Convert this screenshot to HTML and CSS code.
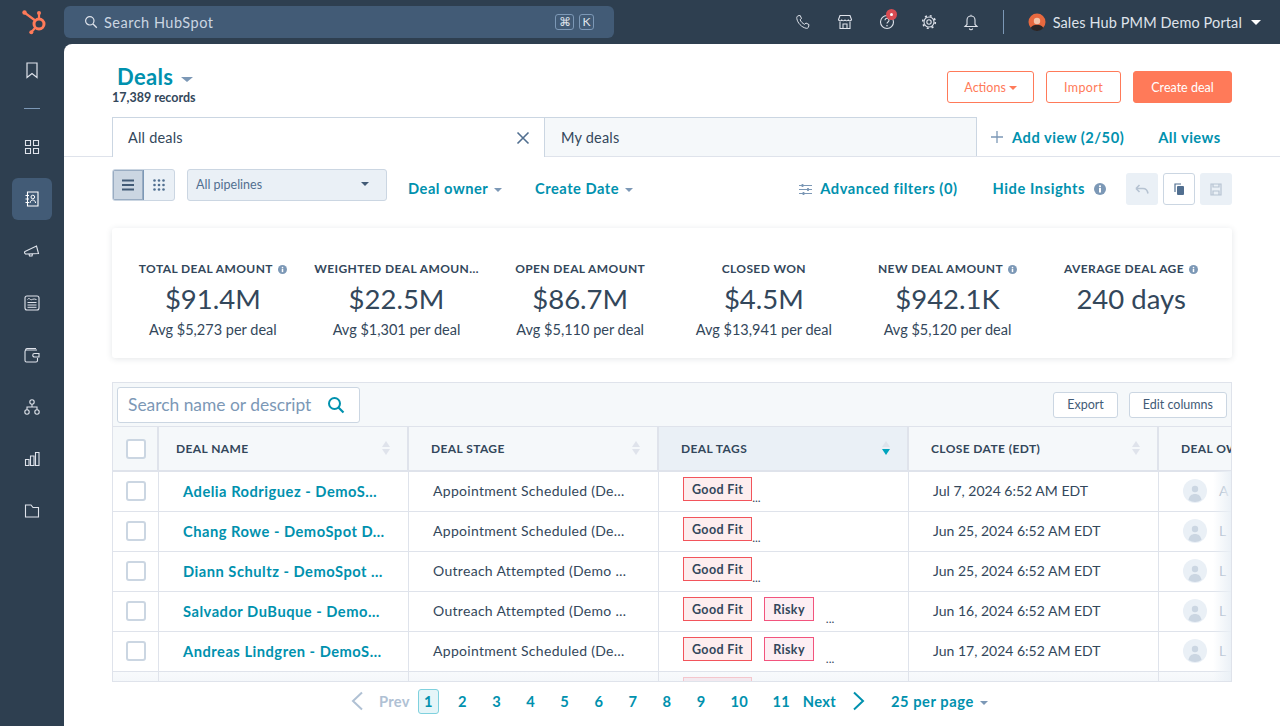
FILE: index.html
```html
<!DOCTYPE html>
<html lang="en">
<head>
<meta charset="utf-8">
<title>Deals</title>
<link rel="stylesheet" href="styles.css">
</head>
<body>
<header class="topbar">
  <div class="logo-cell">
    <svg class="logo" width="24" height="25" viewBox="0 0 24 25"><circle cx="17" cy="14" r="5" fill="none" stroke="#ff7a59" stroke-width="3"/><path d="M17 9V4M13.200 10.500 3 3M13 18 9.500 22" stroke="#ff7a59" stroke-width="2.200" fill="none"/><circle cx="17" cy="3" r="2" fill="#ff7a59"/><circle cx="2.500" cy="2.500" r="2.200" fill="#ff7a59"/><circle cx="9.300" cy="22.300" r="2" fill="#ff7a59"/></svg>
  </div>
  <div class="search">
    <svg class="ico" width="14" height="14" viewBox="0 0 14 14"><circle cx="5.800" cy="5.800" r="4.200" fill="none" stroke="#dfe3eb" stroke-width="1.200"/><path d="M9 9l3.800 3.800" stroke="#dfe3eb" stroke-width="1.300"/></svg>
    <span class="search-text">Search HubSpot</span>
    <span class="keys"><kbd class="key key-cmd">⌘</kbd><kbd class="key">K</kbd></span>
  </div>
  <div class="top-icons">
    <svg width="16" height="16" viewBox="0 0 16 16"><path d="M3 1.800 5.200 1.500l1.300 3-1.400 1.200c.8 2 2.400 3.700 4.400 4.600L11 9l3 1.600-.5 2.400c-.3 1-1.200 1.500-2.200 1.300C6.500 13.300 2.600 9 1.800 4.500 1.600 3.300 2 2.300 3 1.800Z" fill="none" stroke="#dfe3eb" stroke-width="1"/></svg>
    <svg width="16" height="16" viewBox="0 0 16 16"><path d="M3 1.500h10l1.500 4a1.800 1.800 0 0 1-3.300.5 2 2 0 0 1-3.200 0 2 2 0 0 1-3.200 0A1.800 1.800 0 0 1 1.500 5.500ZM3 8v6.500h10V8M6 14.500V10h4v4.500" fill="none" stroke="#dfe3eb" stroke-width="1.100"/></svg>
    <span class="help">
      <svg width="16" height="16" viewBox="0 0 16 16"><circle cx="8" cy="8" r="6.500" fill="none" stroke="#dfe3eb" stroke-width="1.100"/><path d="M6 6.200a2 2 0 1 1 3 1.800c-.7.400-1 .8-1 1.600" fill="none" stroke="#dfe3eb" stroke-width="1.100"/><circle cx="8" cy="11.800" r=".8" fill="#dfe3eb"/></svg>
      <span class="badge"></span>
    </span>
    <svg width="16" height="16" viewBox="0 0 16 16"><circle cx="8" cy="8" r="2.200" fill="none" stroke="#dfe3eb" stroke-width="1.100"/><circle cx="8" cy="8" r="5" fill="none" stroke="#dfe3eb" stroke-width="1.100"/><circle cx="8" cy="8" r="6.300" fill="none" stroke="#dfe3eb" stroke-width="1.600" stroke-dasharray="2 2.950"/></svg>
    <svg width="16" height="17" viewBox="0 0 16 17"><path d="M8 2a4 4 0 0 1 4 4v4.500l2 2H2l2-2V6a4 4 0 0 1 4-4ZM8 .8V2M6.300 14.500a1.800 1.800 0 0 0 3.400 0" fill="none" stroke="#dfe3eb" stroke-width="1.100"/></svg>
  </div>
  <span class="divider"></span>
  <div class="portal">
    <svg class="avatar" width="18" height="18" viewBox="0 0 18 18"><circle cx="9" cy="9" r="8.500" fill="#e8693f"/><path d="M2.500 15c1.500-2.500 3.500-3.300 6.500-3.300s5 .8 6.500 3.300A8.500 8.500 0 0 1 2.500 15Z" fill="#2b2626"/><circle cx="9" cy="8" r="3.200" fill="#f3c3a8"/></svg>
    <span>Sales Hub PMM Demo Portal</span>
    <i class="caret caret-white"></i>
  </div>
</header>

<div class="shell">
  <nav class="sidebar">
    <span class="nav-item"><svg width="18" height="18" viewBox="0 0 18 18"><path d="M4 2h10v14.500l-5-4-5 4Z" fill="none" stroke="#dfe3eb" stroke-width="1.200"/></svg></span>
    <span class="nav-rule"></span>
    <span class="nav-item"><svg width="18" height="18" viewBox="0 0 18 18"><path d="M2.500 2.500h5v5h-5ZM10.500 2.500h5v5h-5ZM2.500 10.500h5v5h-5ZM10.500 10.500h5v5h-5Z" fill="none" stroke="#dfe3eb" stroke-width="1.100"/></svg></span>
    <span class="nav-item nav-active"><svg width="18" height="18" viewBox="0 0 18 18"><path d="M4.500 2h10.500v14H4.500ZM2.500 5.500h3.500M2.500 9h3.500M2.500 12.500h3.500" fill="none" stroke="#fff" stroke-width="1.100"/><circle cx="9.800" cy="7" r="1.800" fill="none" stroke="#fff"/><path d="M7 13c.3-2 1.400-3 2.800-3s2.500 1 2.800 3" fill="none" stroke="#fff"/></svg></span>
    <span class="nav-item"><svg width="18" height="18" viewBox="0 0 18 18"><path d="M2 9.500 13.500 4l2 7.500-12 .5a1.500 1.500 0 0 1-1.500-2.500ZM6 12l.5 2h2.500l.5-2" fill="none" stroke="#dfe3eb" stroke-width="1.100"/></svg></span>
    <span class="nav-item"><svg width="18" height="18" viewBox="0 0 18 18"><rect x="2" y="2" width="14" height="14" rx="2" fill="none" stroke="#dfe3eb" stroke-width="1.100"/><path d="M4.500 5.500c1-1.500 2-1 3 0s2.500-1.500 6 0M4.500 8.500h9M4.500 11h9M4.500 13.300h9" fill="none" stroke="#dfe3eb"/></svg></span>
    <span class="nav-item"><svg width="18" height="18" viewBox="0 0 18 18"><path d="M14 4H3.500a1.500 1.500 0 0 0-1.500 1.500v9A1.500 1.500 0 0 0 3.500 16H13a1.500 1.500 0 0 0 1.500-1.500V12M2.500 4c.2-1 .8-1.500 1.500-1.500h9M11.500 7.500H16v3.500h-4.500a1.700 1.700 0 0 1 0-3.500Z" fill="none" stroke="#dfe3eb" stroke-width="1.100"/></svg></span>
    <span class="nav-item"><svg width="18" height="18" viewBox="0 0 18 18"><circle cx="9" cy="4" r="2.200" fill="none" stroke="#dfe3eb" stroke-width="1.100"/><circle cx="4" cy="14" r="2.200" fill="none" stroke="#dfe3eb" stroke-width="1.100"/><circle cx="14" cy="14" r="2.200" fill="none" stroke="#dfe3eb" stroke-width="1.100"/><path d="M9 6.200V9M4 11.800V9h10v2.800" fill="none" stroke="#dfe3eb" stroke-width="1.100"/></svg></span>
    <span class="nav-item"><svg width="18" height="18" viewBox="0 0 18 18"><path d="M2.500 9.500h3.500v6H2.500ZM7.500 6h3.500v9.500H7.500ZM12.500 2.500H16v13h-3.500Z" fill="none" stroke="#dfe3eb" stroke-width="1.100"/></svg></span>
    <span class="nav-item"><svg width="18" height="18" viewBox="0 0 18 18"><path d="M2.500 3h5.500l2 2.500h5.500v9.500H2.500Z" fill="none" stroke="#dfe3eb" stroke-width="1.100"/></svg></span>
  </nav>

  <main class="content">
    <section class="page-head">
      <div class="title-block">
        <h1 class="title">Deals <i class="caret caret-grey caret-lg"></i></h1>
        <p class="records">17,389 records</p>
      </div>
      <div class="head-actions">
        <button class="btn btn-outline">Actions <i class="caret caret-orange"></i></button>
        <button class="btn btn-outline btn-import">Import</button>
        <button class="btn btn-solid">Create deal</button>
      </div>
    </section>

    <section class="tabs">
      <div class="tab tab-active"><span>All deals</span>
        <svg width="14" height="14" viewBox="0 0 14 14"><path d="M1.500 1.500l11 11M12.500 1.500l-11 11" stroke="#516f90" stroke-width="1.600"/></svg>
      </div>
      <div class="tab tab-idle"><span>My deals</span></div>
      <div class="tab-links">
        <svg width="12" height="12" viewBox="0 0 12 12"><path d="M6 0v12M0 6h12" stroke="#7c98b6" stroke-width="1.300"/></svg>
        <a class="link add-view">Add view (2/50)</a>
        <a class="link">All views</a>
      </div>
    </section>

    <section class="toolbar">
      <div class="view-toggle">
        <span class="toggle toggle-on"><svg width="14" height="12" viewBox="0 0 14 12"><path d="M1 1.500h12M1 6h12M1 10.500h12" stroke="#425b76" stroke-width="2"/></svg></span>
        <span class="toggle"><svg width="14" height="14" viewBox="0 0 14 14" fill="#516f90"><circle cx="2.500" cy="2.500" r="1.300"/><circle cx="7" cy="2.500" r="1.300"/><circle cx="11.500" cy="2.500" r="1.300"/><circle cx="2.500" cy="7" r="1.300"/><circle cx="7" cy="7" r="1.300"/><circle cx="11.500" cy="7" r="1.300"/><circle cx="2.500" cy="11.500" r="1.300"/><circle cx="7" cy="11.500" r="1.300"/><circle cx="11.500" cy="11.500" r="1.300"/></svg></span>
      </div>
      <div class="select"><span>All pipelines</span><i class="caret caret-dark"></i></div>
      <a class="link filter">Deal owner <i class="caret caret-grey"></i></a>
      <a class="link filter">Create Date <i class="caret caret-grey"></i></a>
      <div class="toolbar-right">
        <svg width="13" height="13" viewBox="0 0 13 13"><path d="M0 2.500h13M0 6.500h13M0 10.500h13" stroke="#7c98b6" stroke-width="1.200"/><path d="M3.500 1v3M9 5v3M4.500 9v3" stroke="#7c98b6" stroke-width="1.800"/></svg>
        <a class="link adv">Advanced filters (0)</a>
        <a class="link hide-insights">Hide Insights</a>
        <svg class="info-lg" width="12" height="12" viewBox="0 0 12 12"><circle cx="6" cy="6" r="6" fill="#7c98b6"/><rect x="5" y="5" width="2" height="4.500" fill="#fff"/><circle cx="6" cy="3.300" r="1.100" fill="#fff"/></svg>
        <span class="square square-off"><svg width="14" height="10" viewBox="0 0 14 10"><path d="M1 4.500 4.500 1M1 4.500 4.500 8M1 4.500h7c3 0 4.500 2 5 5" fill="none" stroke="#b6c3d2" stroke-width="1.600"/></svg></span>
        <span class="square square-on"><svg width="10" height="12" viewBox="0 0 10 12"><rect x="3" y="3" width="7" height="9" rx="1" fill="#516f90"/><path d="M1 9V1h6" fill="none" stroke="#516f90" stroke-width="1.200"/></svg></span>
        <span class="square square-off"><svg width="12" height="13" viewBox="0 0 12 13"><path d="M1 1h10v11H1ZM3 1v3h6V1M3 12V8h6v4" fill="none" stroke="#b6c3d2" stroke-width="1.200"/></svg></span>
      </div>
    </section>

    <section class="kpis">
      <div class="kpi"><h3 class="kpi-label">TOTAL DEAL AMOUNT <svg class="info" width="9" height="9" viewBox="0 0 12 12"><circle cx="6" cy="6" r="6" fill="#7c98b6"/><rect x="5" y="5" width="2" height="4.500" fill="#fff"/><circle cx="6" cy="3.300" r="1.100" fill="#fff"/></svg></h3><p class="kpi-value">$91.4M</p><p class="kpi-sub">Avg $5,273 per deal</p></div>
      <div class="kpi"><h3 class="kpi-label">WEIGHTED DEAL AMOUN…</h3><p class="kpi-value">$22.5M</p><p class="kpi-sub">Avg $1,301 per deal</p></div>
      <div class="kpi"><h3 class="kpi-label">OPEN DEAL AMOUNT</h3><p class="kpi-value">$86.7M</p><p class="kpi-sub">Avg $5,110 per deal</p></div>
      <div class="kpi"><h3 class="kpi-label">CLOSED WON</h3><p class="kpi-value">$4.5M</p><p class="kpi-sub">Avg $13,941 per deal</p></div>
      <div class="kpi"><h3 class="kpi-label">NEW DEAL AMOUNT <svg class="info" width="9" height="9" viewBox="0 0 12 12"><circle cx="6" cy="6" r="6" fill="#7c98b6"/><rect x="5" y="5" width="2" height="4.500" fill="#fff"/><circle cx="6" cy="3.300" r="1.100" fill="#fff"/></svg></h3><p class="kpi-value">$942.1K</p><p class="kpi-sub">Avg $5,120 per deal</p></div>
      <div class="kpi"><h3 class="kpi-label">AVERAGE DEAL AGE <svg class="info" width="9" height="9" viewBox="0 0 12 12"><circle cx="6" cy="6" r="6" fill="#7c98b6"/><rect x="5" y="5" width="2" height="4.500" fill="#fff"/><circle cx="6" cy="3.300" r="1.100" fill="#fff"/></svg></h3><p class="kpi-value">240 days</p></div>
    </section>

    <section class="table-wrap">
      <div class="table-tools">
        <div class="table-search">
          <span class="table-search-text">Search name or descript</span>
          <svg width="18" height="18" viewBox="0 0 18 18"><circle cx="7.500" cy="7.500" r="5.500" fill="none" stroke="#0091ae" stroke-width="2"/><path d="M11.500 11.500l5 5" stroke="#0091ae" stroke-width="2.200"/></svg>
        </div>
        <div class="table-btns">
          <button class="btn-small">Export</button>
          <button class="btn-small">Edit columns</button>
        </div>
      </div>
      <div class="grid">
        <div class="row row-head">
          <div class="cell cell-check cell-check-head"><span class="check"></span></div>
          <div class="cell cell-head cell-head-first">DEAL NAME<span class="sort"><i class="up"></i><i class="down"></i></span></div>
          <div class="cell cell-head">DEAL STAGE<span class="sort"><i class="up"></i><i class="down"></i></span></div>
          <div class="cell cell-head cell-sorted">DEAL TAGS<span class="sort"><i class="up"></i><i class="down down-on"></i></span></div>
          <div class="cell cell-head">CLOSE DATE (EDT)<span class="sort"><i class="up"></i><i class="down"></i></span></div>
          <div class="cell cell-head">DEAL OW</div>
        </div>
        <div class="row">
          <div class="cell cell-check"><span class="check"></span></div>
          <div class="cell cell-name"><a class="link">Adelia Rodriguez - DemoS…</a></div>
          <div class="cell cell-text">Appointment Scheduled (De…</div>
          <div class="cell cell-tags"><span class="tag tag-red">Good Fit</span><span class="more">...</span></div>
          <div class="cell cell-date">Jul 7, 2024 6:52 AM EDT</div>
          <div class="cell cell-owner"><svg class="user" width="24" height="24" viewBox="0 0 24 24"><circle cx="12" cy="12" r="12" fill="#eaf0f6"/><circle cx="12" cy="10" r="3.200" fill="#cbd6e2"/><path d="M5.500 21c.6-4 3-6 6.500-6s5.900 2 6.500 6a12 12 0 0 1-13 0Z" fill="#cbd6e2"/></svg><span class="owner-name">A</span></div>
        </div>
        <div class="row">
          <div class="cell cell-check"><span class="check"></span></div>
          <div class="cell cell-name"><a class="link">Chang Rowe - DemoSpot D…</a></div>
          <div class="cell cell-text">Appointment Scheduled (De…</div>
          <div class="cell cell-tags"><span class="tag tag-red">Good Fit</span><span class="more">...</span></div>
          <div class="cell cell-date">Jun 25, 2024 6:52 AM EDT</div>
          <div class="cell cell-owner"><svg class="user" width="24" height="24" viewBox="0 0 24 24"><circle cx="12" cy="12" r="12" fill="#eaf0f6"/><circle cx="12" cy="10" r="3.200" fill="#cbd6e2"/><path d="M5.500 21c.6-4 3-6 6.500-6s5.900 2 6.500 6a12 12 0 0 1-13 0Z" fill="#cbd6e2"/></svg><span class="owner-name">L</span></div>
        </div>
        <div class="row">
          <div class="cell cell-check"><span class="check"></span></div>
          <div class="cell cell-name"><a class="link">Diann Schultz - DemoSpot …</a></div>
          <div class="cell cell-text">Outreach Attempted (Demo …</div>
          <div class="cell cell-tags"><span class="tag tag-red">Good Fit</span><span class="more">...</span></div>
          <div class="cell cell-date">Jun 25, 2024 6:52 AM EDT</div>
          <div class="cell cell-owner"><svg class="user" width="24" height="24" viewBox="0 0 24 24"><circle cx="12" cy="12" r="12" fill="#eaf0f6"/><circle cx="12" cy="10" r="3.200" fill="#cbd6e2"/><path d="M5.500 21c.6-4 3-6 6.500-6s5.900 2 6.500 6a12 12 0 0 1-13 0Z" fill="#cbd6e2"/></svg><span class="owner-name">L</span></div>
        </div>
        <div class="row">
          <div class="cell cell-check"><span class="check"></span></div>
          <div class="cell cell-name"><a class="link">Salvador DuBuque - Demo…</a></div>
          <div class="cell cell-text">Outreach Attempted (Demo …</div>
          <div class="cell cell-tags"><span class="tag tag-red">Good Fit</span><span class="tag tag-pink">Risky</span><span class="more more-far">...</span></div>
          <div class="cell cell-date">Jun 16, 2024 6:52 AM EDT</div>
          <div class="cell cell-owner"><svg class="user" width="24" height="24" viewBox="0 0 24 24"><circle cx="12" cy="12" r="12" fill="#eaf0f6"/><circle cx="12" cy="10" r="3.200" fill="#cbd6e2"/><path d="M5.500 21c.6-4 3-6 6.500-6s5.900 2 6.500 6a12 12 0 0 1-13 0Z" fill="#cbd6e2"/></svg><span class="owner-name">L</span></div>
        </div>
        <div class="row">
          <div class="cell cell-check"><span class="check"></span></div>
          <div class="cell cell-name"><a class="link">Andreas Lindgren - DemoS…</a></div>
          <div class="cell cell-text">Appointment Scheduled (De…</div>
          <div class="cell cell-tags"><span class="tag tag-red">Good Fit</span><span class="tag tag-pink">Risky</span><span class="more more-far">...</span></div>
          <div class="cell cell-date">Jun 17, 2024 6:52 AM EDT</div>
          <div class="cell cell-owner"><svg class="user" width="24" height="24" viewBox="0 0 24 24"><circle cx="12" cy="12" r="12" fill="#eaf0f6"/><circle cx="12" cy="10" r="3.200" fill="#cbd6e2"/><path d="M5.500 21c.6-4 3-6 6.500-6s5.900 2 6.500 6a12 12 0 0 1-13 0Z" fill="#cbd6e2"/></svg><span class="owner-name">L</span></div>
        </div>
        <div class="row row-cut">
          <div class="cell cell-check"></div>
          <div class="cell"></div>
          <div class="cell"></div>
          <div class="cell cell-tags"><span class="tag tag-faded"></span></div>
          <div class="cell"></div>
          <div class="cell"></div>
        </div>
      </div>
      <div class="table-fade"></div>
    </section>

    <nav class="pager">
      <svg width="14" height="20" viewBox="0 0 14 20"><path d="M12 1.500 3 10l9 8.500" fill="none" stroke="#b0c1d4" stroke-width="2"/></svg>
      <span class="prev">Prev</span>
      <span class="page page-on">1</span>
      <a class="page">2</a><a class="page">3</a><a class="page">4</a><a class="page">5</a><a class="page">6</a><a class="page">7</a><a class="page">8</a><a class="page">9</a><a class="page page-wide">10</a><a class="page page-wide page-last">11</a>
      <a class="next">Next</a>
      <svg width="14" height="20" viewBox="0 0 14 20"><path d="M2 1.500 11 10l-9 8.500" fill="none" stroke="#0091ae" stroke-width="2"/></svg>
      <a class="per-page">25 per page <i class="caret caret-grey"></i></a>
    </nav>
  </main>
</div>
</body>
</html>
```
FILE: styles.css
```css
* { box-sizing: border-box; }
html, body { margin: 0; height: 726px; overflow: hidden; }
body {
  font-family: Lato, "Noto Sans", sans-serif;
  font-size: 14px;
  color: #33475b;
  background: #2e3f50;
  display: flex;
  flex-direction: column;
}
h1, h3, p { margin: 0; }
i { display: inline-block; }
button { font-family: inherit; cursor: pointer; }

.caret { width: 0; height: 0; border-style: solid; border-color: transparent; border-width: 4px 4px 0; vertical-align: middle; }
.caret-lg { border-width: 5px 6px 0; margin-left: 1px; }
.caret-white { border-top-color: #fff; border-width: 5px 5px 0; margin-left: 2px; }
.caret-grey { border-top-color: #7c98b6; margin-left: 2px; }
.caret-orange { border-top-color: #ff7a59; }
.caret-dark { border-top-color: #425b76; }

/* top bar */
.topbar { height: 44px; flex: none; display: flex; align-items: center; padding-right: 19px; color: #dfe3eb; }
.logo-cell { width: 64px; flex: none; display: flex; justify-content: center; padding-left: 3px; }
.search {
  width: 550px; height: 32px; padding: 0 20px; flex: none;
  display: flex; align-items: center; gap: 6px;
  background: #425b76; border-radius: 6px; font-size: 14.5px; letter-spacing: .5px;
}
.search-text { flex: 1; color: #cbd6e2; }
.keys { display: flex; gap: 5px; }
.key { font-family: inherit; font-size: 12px; height: 16px; min-width: 15px; padding: 0 1px; border: 1px solid #7c98b6; border-radius: 3px; display: flex; align-items: center; justify-content: center; line-height: 1; letter-spacing: 0; }
.key-cmd { min-width: 19px; }
.top-icons { display: flex; align-items: center; gap: 26px; margin-left: auto; }
.top-icons svg { display: block; }
.help { position: relative; display: block; }
.badge { position: absolute; top: -5px; left: 7px; width: 11px; height: 11px; border-radius: 50%; background: #d94c53; }
.badge::after { content: ""; position: absolute; left: 4px; top: 4px; width: 3px; height: 3px; background: #fff; border-radius: 50%; }
.divider { width: 1px; height: 24px; background: #7c98b6; margin: 0 24px; flex: none; }
.portal { display: flex; align-items: center; gap: 7px; font-size: 14.5px; letter-spacing: .12px; color: #dfe3eb; white-space: nowrap; }

/* shell */
.shell { flex: 1; display: flex; min-height: 0; }
.sidebar { width: 64px; flex: none; display: flex; flex-direction: column; align-items: center; padding-top: 6px; gap: 12px; }
.nav-item { width: 40px; height: 40px; border-radius: 6px; display: flex; align-items: center; justify-content: center; flex: none; }
.nav-active { background: #425b76; height: 42px; margin: -1px 0; }
.nav-rule { width: 16px; height: 1px; background: #7c98b6; margin: 6px 0; }
.content { flex: 1; min-width: 0; background: #fff; border-top-left-radius: 8px; display: flex; flex-direction: column; overflow: hidden; }

/* head */
.page-head { display: flex; justify-content: space-between; align-items: flex-start; padding: 21px 48px 0; height: 73px; flex: none; }
.title { font-size: 22px; font-weight: 700; line-height: 24px; color: #0091ae; margin-left: 5px; letter-spacing: .3px; }
.records { font-size: 12.5px; font-weight: 700; line-height: 16px; margin-top: 1px; color: #33475b; }
.head-actions { display: flex; gap: 12px; margin-top: 6px; }
.btn { height: 32px; padding: 0 16px; font-size: 12.5px; border-radius: 3px; }
.btn-outline { background: #fff; border: 1px solid #ff7a59; color: #ff7a59; }
.btn-import { width: 75px; padding: 0; letter-spacing: .4px; }
.btn-solid { width: 99px; padding: 0; background: #ff7a59; border: 1px solid #ff7a59; color: #fff; }

/* tabs */
.tabs { height: 40px; flex: none; display: flex; align-items: stretch; padding-left: 48px; border-bottom: 1px solid #dfe3eb; }
.tab { display: flex; align-items: center; justify-content: space-between; padding: 0 14px 0 16px; font-size: 14.5px; border: 1px solid #cbd6e2; border-bottom: 0; letter-spacing: .2px; }
.tab-active { width: 433px; background: #fff; margin-bottom: -1px; padding-left: 15px; }
.tab-idle { width: 432px; background: #f5f8fa; border-left: 0; }
.tab-links { display: flex; align-items: center; padding-left: 14px; }
.tab-links .link { font-size: 14.7px; letter-spacing: .5px; }
.tab-links .add-view { margin-left: 9px; margin-right: 34px; }
.link { color: #0091ae; font-weight: 700; letter-spacing: .35px; text-decoration: none; }

/* toolbar */
.toolbar { height: 71px; flex: none; display: flex; align-items: flex-start; padding: 12px 48px 0; }
.view-toggle { display: flex; height: 32px; border: 1px solid #cbd6e2; border-radius: 3px; background: #eaf0f6; overflow: hidden; }
.toggle { width: 30px; display: flex; align-items: center; justify-content: center; }
.toggle-on { width: 31px; background: #cbd6e2; border-right: 1px solid #7c98b6; box-shadow: inset 0 0 0 1px #99acc2; }
.select { width: 200px; height: 32px; margin-left: 12px; padding: 0 17px 2px 8px; display: flex; align-items: center; justify-content: space-between; background: #eaf0f6; border: 1px solid #cbd6e2; border-radius: 3px; font-size: 12.5px; color: #516f90; }
.filter { font-size: 14.7px; line-height: 24px; margin-top: 7px; margin-left: 21px; letter-spacing: .5px; }
.filter + .filter { margin-left: 33px; }
.filter .caret { margin-left: 2px; }
.toolbar-right { margin-left: auto; display: flex; align-items: center; height: 32px; margin-top: 4px; }
.toolbar-right .link { font-size: 14.7px; letter-spacing: .55px; margin-bottom: 2px; }
.adv { margin-left: 8px; }
.toolbar-right .hide-insights { margin-left: 35px; }
.info-lg { margin-left: 9px; }
.square { width: 32px; height: 32px; border-radius: 3px; margin-left: 5px; display: flex; align-items: center; justify-content: center; }
.square:first-of-type { margin-left: 20px; }
.square-off { background: #eaf0f6; }
.square-on { background: #fff; border: 1px solid #cbd6e2; }

/* KPIs */
.kpis { margin: 0 48px; height: 130px; flex: none; display: grid; grid-template-columns: repeat(6, 1fr); padding: 32px 9px 0; border-radius: 3px; box-shadow: 0 1px 6px rgba(45, 62, 80, .13); }
.kpi { text-align: center; min-width: 0; }
.kpi-label { font-size: 12px; line-height: 18px; font-weight: 700; letter-spacing: .4px; white-space: nowrap; }
.info { margin-left: 2px; vertical-align: -1px; }
.kpi-value { font-size: 27.5px; line-height: 36px; font-weight: 400; color: #33475b; margin-top: 3px; }
.kpi-sub { font-size: 14.5px; line-height: 20px; margin-top: 3px; }

/* table */
.table-wrap { position: relative; margin: 24px 48px 0; height: 300px; flex: none; border: 1px solid #dfe3eb; overflow: hidden; }
.table-tools { height: 44px; background: #f5f8fa; display: flex; align-items: center; justify-content: space-between; padding: 0 4px; border-bottom: 1px solid #dfe3eb; }
.table-search { width: 243px; height: 36px; background: #fff; border: 1px solid #cbd6e2; border-radius: 3px; display: flex; align-items: center; justify-content: space-between; padding: 0 14px 0 10px; }
.table-search-text { width: 184px; overflow: hidden; white-space: nowrap; font-size: 17.4px; color: #7c98b6; }
.table-btns { display: flex; gap: 11px; }
.btn-small { height: 26px; padding: 0 13px; background: #fff; border: 1px solid #cbd6e2; border-radius: 3px; font-size: 12.5px; color: #425b76; }
.row { display: grid; grid-template-columns: 46px 250px 250px 250px 250px 250px; width: 1296px; height: 40px; border-bottom: 1px solid #dfe3eb; }
.row-head { height: 45px; background: #f5f8fa; border-bottom: 2px solid #dfe3eb; }
.row-cut { background: linear-gradient(#f8fafc, #e9eef4); }
.cell { display: flex; align-items: center; border-right: 1px solid #dfe3eb; min-width: 0; white-space: nowrap; overflow: hidden; padding-bottom: 2px; }
.row-head .cell { border-right-width: 2px; padding-bottom: 0; }
.cell-check { justify-content: center; }
.cell-check-head { padding-left: 2px; }
.check { width: 20px; height: 20px; background: #fff; border: 2px solid #cbd6e2; border-radius: 3px; }
.cell-head { position: relative; padding-left: 22px; font-size: 12px; font-weight: 700; letter-spacing: .4px; }
.cell-head-first { padding-left: 17px; }
.cell-sorted { background: #eaf0f6; }
.sort { position: absolute; right: 17px; top: 14px; display: flex; flex-direction: column; gap: 2px; }
.sort .up { width: 0; height: 0; border: solid transparent; border-width: 0 4px 6px; border-bottom-color: #dfe3eb; }
.sort .down { width: 0; height: 0; border: solid transparent; border-width: 6px 4px 0; border-top-color: #dfe3eb; }
.sort .down-on { border-top-color: #00a4bd; }
.cell-name { padding-left: 24px; }
.cell-name .link { font-size: 14.7px; letter-spacing: .5px; }
.cell-text { padding-left: 24px; font-size: 14px; letter-spacing: .3px; }
.cell-date { padding-left: 24px; font-size: 14px; }
.cell-tags { padding-left: 24px; align-items: flex-start; padding-top: 5px; padding-bottom: 0; }
.tag { height: 24px; padding: 0 8px; display: inline-flex; align-items: center; font-size: 12.5px; font-weight: 700; border: 1px solid #f2545b; background: #fdedee; letter-spacing: .35px; }
.tag-pink { margin-left: 12px; border-color: #f2547d; background: #fdeef3; }
.tag-faded { width: 69px; background: #f3e9ef; border-color: #f4c6cc; }
.more { font-size: 12px; line-height: 12px; margin-top: 15px; }
.more-far { margin-left: 12px; margin-top: 16px; }
.cell-owner { padding-left: 24px; gap: 12px; color: #99acc2; font-size: 14px; }
.table-fade { position: absolute; right: 0; top: 88px; bottom: 0; width: 18px; background: linear-gradient(to right, rgba(255,255,255,0), rgba(234,240,246,.95)); }

/* pager */
.pager { display: flex; align-items: center; padding-left: 286px; height: 38px; font-size: 14.7px; font-weight: 700; color: #0091ae; letter-spacing: .3px; }
.prev { color: #b0c1d4; margin-left: 15px; margin-right: 8px; }
.page { width: 21px; height: 25px; display: flex; align-items: center; justify-content: center; margin-right: 13.1px; color: #0091ae; }
.page-wide { width: 29px; }
.page-last { margin-right: 7px; }
.page-on { background: #e5f5f8; border: 1px solid #7fd1de; border-radius: 3px; }
.next { margin-right: 16px; }
.per-page { margin-left: 25px; letter-spacing: .55px; }
```
